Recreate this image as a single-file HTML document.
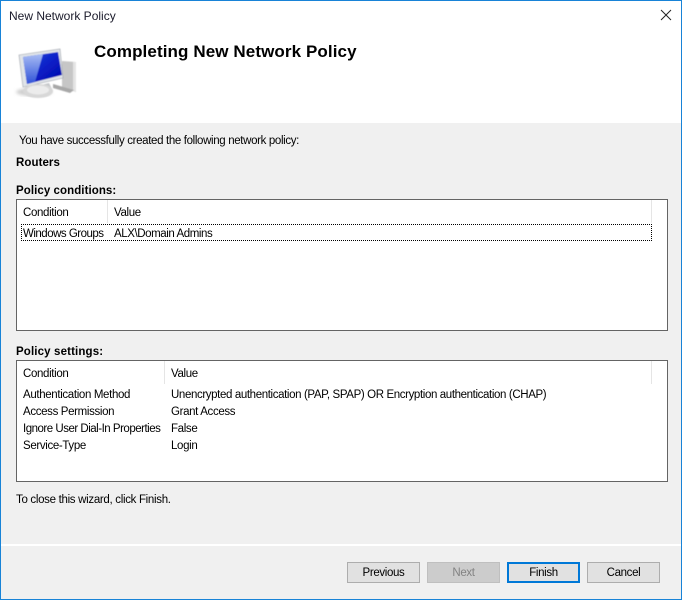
<!DOCTYPE html>
<html><head><meta charset="utf-8"><style>
html,body{margin:0;padding:0}
body{width:682px;height:600px;position:relative;overflow:hidden;background:#f0f0f0;font-family:"Liberation Sans",sans-serif;font-size:11.5px;letter-spacing:-.35px;color:#000}
.a{position:absolute;white-space:nowrap;line-height:14px}
.b{font-weight:bold;letter-spacing:.07px}
.box{position:absolute;background:#fff;border:1px solid #646464;box-sizing:border-box}
.btn{position:absolute;top:562px;width:73px;height:21px;box-sizing:border-box;background:#e1e1e1;border:1px solid #adadad;text-align:center;line-height:20px}
</style></head><body>
<div style="position:absolute;left:0;top:0;width:682px;height:123px;background:#fff"></div>
<div class="a" style="left:9px;top:9px;font-size:12px;letter-spacing:0;color:#1a1a2a">New Network Policy</div>
<svg style="position:absolute;left:660px;top:9px" width="12" height="12"><path d="M1 1L11 11M11 1L1 11" stroke="#222" stroke-width="1" fill="none"/></svg>
<div class="a b" style="left:94px;top:42px;font-size:17px;line-height:20px;letter-spacing:.1px">Completing New Network Policy</div>
<svg style="position:absolute;left:12px;top:46px" width="68" height="56" viewBox="0 0 68 56">
<defs><filter id="f"><feGaussianBlur stdDeviation="0.45"/></filter><filter id="g"><feGaussianBlur stdDeviation="1.5"/></filter>
<linearGradient id="s" x1="0" y1="0" x2="1" y2="1"><stop offset="0" stop-color="#2a50e0"/><stop offset=".5" stop-color="#0a20c8"/><stop offset="1" stop-color="#0004a8"/></linearGradient>
<linearGradient id="h" x1="0" y1="0" x2="0" y2="1"><stop offset="0" stop-color="#a8bcf4"/><stop offset="1" stop-color="#2f52d8"/></linearGradient></defs>
<ellipse cx="22" cy="46" rx="18" ry="4" fill="#cfcfcf" filter="url(#g)"/>
<g filter="url(#f)">
<path d="M50 15L64 16L64 46L50 42Z" fill="#c6c6c6"/>
<path d="M61 16L64 16L64 46L61 45Z" fill="#e4e4e4"/>
<path d="M7 9L48 3L51 32L11 41Z" fill="#e0e4e8" stroke="#9a9fa8" stroke-width=".6"/>
<path d="M11 11L46 6L50 29L15 38Z" fill="url(#s)"/>
<path d="M11 11L31 8L23 36L15 38Z" fill="url(#h)"/>
<path d="M21 41L37 37L40 43L24 46Z" fill="#c6c8ca"/>
<ellipse cx="26" cy="45" rx="15" ry="7" fill="#d8d8d8"/>
<ellipse cx="26" cy="44" rx="11" ry="4.5" fill="#ececec"/>
<path d="M41 38L62 44L58 47L41 42Z" fill="#a8a8a8"/>
</g></svg>

<div class="a" style="left:19px;top:134px">You have successfully created the following network policy:</div>
<div class="a b" style="left:16px;top:156px">Routers</div>
<div class="a b" style="left:16px;top:184px">Policy conditions:</div>

<div class="box" style="left:16px;top:199px;width:652px;height:132px"></div>
<div style="position:absolute;left:107px;top:200px;width:1px;height:23px;background:#e5e5e5"></div>
<div style="position:absolute;left:651px;top:200px;width:1px;height:23px;background:#e5e5e5"></div>
<div class="a" style="left:23px;top:206px">Condition</div>
<div class="a" style="left:114px;top:206px">Value</div>
<div style="position:absolute;left:21px;top:224px;width:631px;height:17px;box-sizing:border-box;border:1px dotted #000"></div>
<div class="a" style="left:23px;top:227px;letter-spacing:-.5px">Windows Groups</div>
<div class="a" style="left:114px;top:227px;letter-spacing:-.42px">ALX\Domain Admins</div>

<div class="a b" style="left:16px;top:345px;letter-spacing:.14px">Policy settings:</div>
<div class="box" style="left:16px;top:360px;width:652px;height:122px"></div>
<div style="position:absolute;left:164px;top:361px;width:1px;height:23px;background:#e5e5e5"></div>
<div style="position:absolute;left:651px;top:361px;width:1px;height:23px;background:#e5e5e5"></div>
<div class="a" style="left:23px;top:367px">Condition</div>
<div class="a" style="left:171px;top:367px">Value</div>
<div class="a" style="left:23px;top:388px">Authentication Method</div>
<div class="a" style="left:171px;top:388px;letter-spacing:-.38px">Unencrypted authentication (PAP, SPAP) OR Encryption authentication (CHAP)</div>
<div class="a" style="left:23px;top:405px">Access Permission</div>
<div class="a" style="left:171px;top:405px">Grant Access</div>
<div class="a" style="left:23px;top:422px;letter-spacing:-.49px">Ignore User Dial-In Properties</div>
<div class="a" style="left:171px;top:422px">False</div>
<div class="a" style="left:23px;top:439px">Service-Type</div>
<div class="a" style="left:171px;top:439px">Login</div>
<div class="a" style="left:16px;top:493px;letter-spacing:-.31px">To close this wizard, click Finish.</div>

<div style="position:absolute;left:0;top:544px;width:682px;height:2px;background:#fff"></div>
<div class="btn" style="left:347px">Previous</div>
<div class="btn" style="left:427px;background:#ccc;border-color:#bfbfbf;color:#838383">Next</div>
<div class="btn" style="left:507px;border:2px solid #0078d7;line-height:18px">Finish</div>
<div class="btn" style="left:587px">Cancel</div>

<div style="position:absolute;left:0;top:0;width:682px;height:600px;box-sizing:border-box;border:1px solid #1883d7;pointer-events:none"></div>
</body></html>
